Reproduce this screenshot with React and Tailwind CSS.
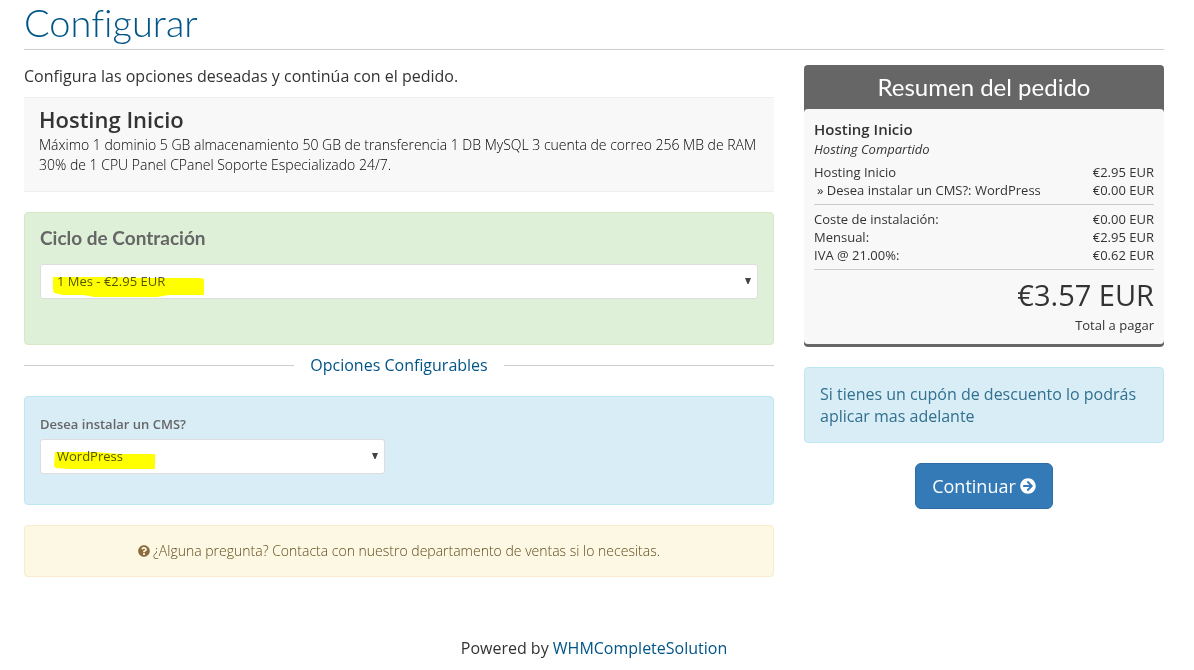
import { useState } from "react";
import { FaArrowCircleRight, FaQuestionCircle } from "react-icons/fa";

const productLines = [
  { label: "Hosting Inicio", price: "€2.95 EUR" },
  { label: "» Desea instalar un CMS?: WordPress", price: "€0.00 EUR", option: true },
];

const totals = [
  { label: "Coste de instalación:", price: "€0.00 EUR" },
  { label: "Mensual:", price: "€2.95 EUR" },
  { label: "IVA @ 21.00%:", price: "€0.62 EUR" },
];

function SelectBox({ id, value, onChange, options, children }) {
  return (
    <div className="relative">
      <select
        id={id}
        value={value}
        onChange={(e) => onChange(e.target.value)}
        className="block h-[35px] w-full appearance-none rounded-[3px] border border-[#ddd] bg-white pl-4 pr-8 text-[13px] text-[#555] outline-none"
      >
        {options.map((option) => (
          <option key={option}>{option}</option>
        ))}
      </select>
      {children}
      <svg
        viewBox="0 0 6 6"
        className="pointer-events-none absolute right-[7px] top-3.5 h-1.5 w-1.5 fill-[#444]"
      >
        <path d="M0 0h6L3.5 6h-1z" />
      </svg>
    </div>
  );
}

function PriceRows({ rows }) {
  return (
    <dl>
      {rows.map((row) => (
        <div key={row.label} className="flex justify-between leading-[18px]">
          <dt className={row.option ? "pl-[3px]" : ""}>{row.label}</dt>
          <dd>{row.price}</dd>
        </div>
      ))}
    </dl>
  );
}

function OrderSummary() {
  return (
    <section className="rounded-sm border-b-[3px] border-[#666] bg-[#666]">
      <h2 className="py-2 text-center font-['Lato','Open_Sans',sans-serif] text-2xl leading-7 text-white">
        Resumen del pedido
      </h2>
      <div className="rounded-sm bg-[#f8f8f8] px-2.5 pb-[9px] pt-2.5 text-[13px]">
        <h3 className="text-[15px] font-semibold leading-5">Hosting Inicio</h3>
        <p className="mb-1 italic leading-5">Hosting Compartido</p>
        <PriceRows rows={productLines} />
        <hr className="my-[5px] border-[#ccc]" />
        <PriceRows rows={totals} />
        <hr className="mt-[5px] border-[#ccc]" />
        <p className="pt-[5px] text-right text-[29px] leading-10">€3.57 EUR</p>
        <p className="text-right leading-5">Total a pagar</p>
      </div>
    </section>
  );
}

export default function App() {
  const [cycle, setCycle] = useState("1 Mes - €2.95 EUR");
  const [cms, setCms] = useState("WordPress");

  return (
    <div className="bg-white pl-6 pr-[30px] font-['Open_Sans',sans-serif] text-base text-[#333]">
      <h1 className="border-b border-[#ccc] pb-[7px] pt-0.5 font-['Lato','Open_Sans',sans-serif] text-[38px] font-light leading-10 text-[#058] [font-variant-ligatures:none]">
        Configurar
      </h1>

      <form
        onSubmit={(e) => e.preventDefault()}
        className="grid grid-cols-[25fr_12fr] items-start gap-[30px] pt-[15px]"
      >
        <main>
          <p className="leading-[22px]">
            Configura las opciones deseadas y continúa con el pedido.
          </p>

          <section className="mt-2.5 border-y border-[#efefef] bg-[#f8f8f8] px-[15px] pb-4 pt-2">
            <h2 className="mb-[3px] text-[22px] font-semibold leading-[26px]">Hosting Inicio</h2>
            <p className="text-sm font-light leading-5 text-black">
              Máximo 1 dominio 5 GB almacenamiento 50 GB de transferencia 1 DB
              MySQL 3 cuenta de correo 256 MB de RAM 30% de 1 CPU Panel CPanel
              Soporte Especializado 24/7.
            </p>
          </section>

          <section className="mt-5 rounded-sm border border-[#d6e9c6] bg-[#dff0d8] px-[15px] pb-[45px] pt-3.5">
            <label
              htmlFor="cycle"
              className="mb-[15px] block font-['Lato','Open_Sans',sans-serif] text-[19px] font-bold leading-[22px] text-[#666]"
            >
              Ciclo de Contración
            </label>
            <SelectBox
              id="cycle"
              value={cycle}
              onChange={setCycle}
              options={["1 Mes - €2.95 EUR"]}
            >
              <svg
                viewBox="0 0 151 20"
                className="pointer-events-none absolute left-[13px] top-[13px] h-5 w-[151px] fill-[#ff0] mix-blend-multiply"
              >
                <path d="M0 0h60l30 1h57l4 1v16h-35l-12 2H42l-12-2H10l-9-2-1-3z" />
              </svg>
            </SelectBox>
          </section>

          <div className="my-2.5 flex items-center gap-4">
            <span className="h-px flex-1 bg-[#ccc]" />
            <h2 className="leading-[21px] text-[#058]">Opciones Configurables</h2>
            <span className="h-px flex-1 bg-[#ccc]" />
          </div>

          <section className="mt-5 rounded-sm border border-[#bce8f1] bg-[#d9edf7] px-[15px] pb-[30px] pt-[15px]">
            <label
              htmlFor="cms"
              className="mb-[5px] block pt-0.5 text-[13px] font-semibold leading-5 text-[#666]"
            >
              Desea instalar un CMS?
            </label>
            <div className="w-[48%]">
              <SelectBox id="cms" value={cms} onChange={setCms} options={["WordPress"]}>
                <svg
                  viewBox="0 0 101 18"
                  className="pointer-events-none absolute left-3.5 top-[13px] h-[18px] w-[101px] fill-[#ff0] mix-blend-multiply"
                >
                  <path d="M1 0h40l25 2h35v15H16L2 16l-2-2z" />
                </svg>
              </SelectBox>
            </div>
          </section>

          <p className="mt-5 rounded-sm border border-[#faebcc] bg-[#fcf8e3] p-[15px] text-center text-sm font-light leading-5 text-[#634a1c]">
            <FaQuestionCircle className="mr-[3px] inline h-3 w-3 align-[-1px] text-[#8a6d3b]" />
            ¿Alguna pregunta? Contacta con nuestro departamento de ventas si lo necesitas.
          </p>
        </main>

        <aside>
          <OrderSummary />
          <p className="mt-5 rounded-sm border border-[#bce8f1] bg-[#d9edf7] px-[15px] py-[15px] leading-[22px] text-[#31708f]">
            Si tienes un cupón de descuento lo podrás aplicar mas adelante
          </p>
          <div className="mt-5 text-center">
            <button
              type="submit"
              className="inline-flex items-center gap-1 rounded-md border border-[#2e6da4] bg-[#337ab7] px-4 py-2.5 text-lg leading-6 text-white"
            >
              Continuar
              <FaArrowCircleRight className="h-4 w-4" />
            </button>
          </div>
        </aside>
      </form>

      <footer className="pt-[60px] text-center leading-[22px]">
        Powered by{" "}
        <a href="#" className="text-[#058]">
          WHMCompleteSolution
        </a>
      </footer>
    </div>
  );
}
